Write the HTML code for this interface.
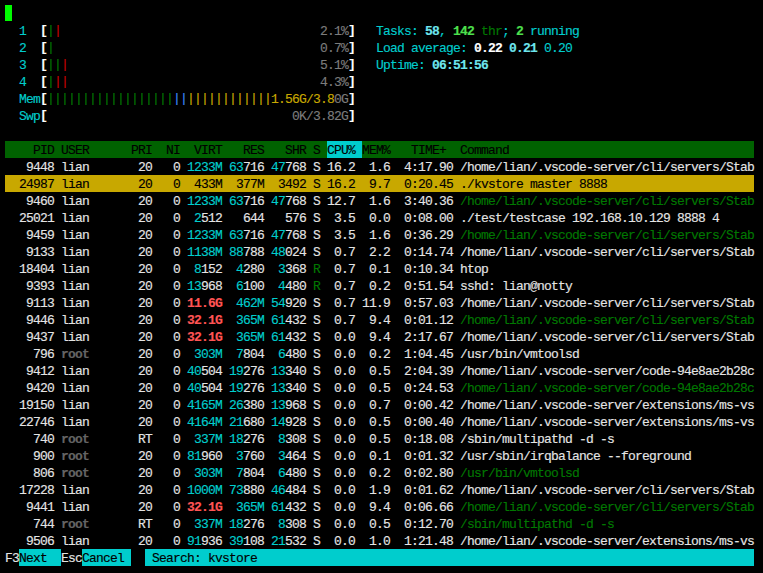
<!DOCTYPE html><html><head><meta charset="utf-8"><style>
html,body{margin:0;padding:0;background:#000;width:763px;height:573px;overflow:hidden;position:relative}
.q{position:absolute}
.r{position:absolute;left:5px;height:17px;line-height:17px;white-space:pre;font-family:"Liberation Mono",monospace;font-size:13px;letter-spacing:-0.8013px;transform-origin:0 0;transform:scaleX(1.00000);-webkit-text-stroke:0.15px currentColor}
.sw{color:#e4e4e4}
.bw{color:#ffffff;font-weight:bold}
.sc{color:#00cdcd}
.bc{color:#6ee6ee;font-weight:bold}
.sg{color:#007800}
.bg{color:#4ee04e;font-weight:bold}
.sd{color:#7c7c7c}
.sr{color:#c80000}
.br{color:#ff5454;font-weight:bold}
.sb{color:#3c8cff}
.sy{color:#c8a800}
.sk{color:#000000}
.sx{color:#646464;font-weight:bold}
.zgb{color:#007800;position:relative;top:-1px}
.zwb{color:#ffffff;font-weight:bold;position:relative;top:-1px}
.zrb{color:#c80000;position:relative;top:-1px}
.zbb{color:#3c8cff;position:relative;top:-1px}
.zyb{color:#c8a800;position:relative;top:-1px}
</style></head><body>
<div class="q" style="left:5px;top:5px;width:7px;height:16px;background:#00fa00"></div>
<div class="q" style="left:5px;top:141px;width:749px;height:17px;background:#006200"></div>
<div class="q" style="left:327px;top:141px;width:35px;height:17px;background:#00cdcd"></div>
<div class="q" style="left:5px;top:175px;width:749px;height:17px;background:#c8a800"></div>
<div class="q" style="left:19px;top:549px;width:42px;height:17px;background:#00cdcd"></div>
<div class="q" style="left:82px;top:549px;width:49px;height:17px;background:#00cdcd"></div>
<div class="q" style="left:145px;top:549px;width:609px;height:17px;background:#00cdcd"></div>
<div class="r" style="top:23px"><span class="sw">  </span><span class="sc">1  </span><span class="zwb">[</span><span class="zgb">|</span><span class="zrb">|                                     </span><span class="sd">2.1%</span><span class="zwb">]   </span><span class="sc">Tasks: </span><span class="bc">58</span><span class="sc">, </span><span class="bg">142 </span><span class="sg">thr</span><span class="sc">; </span><span class="bg">2 </span><span class="sc">running</span></div>
<div class="r" style="top:40px"><span class="sw">  </span><span class="sc">2  </span><span class="zwb">[</span><span class="zgb">|                                      </span><span class="sd">0.7%</span><span class="zwb">]   </span><span class="sc">Load average: </span><span class="bw">0.22 </span><span class="bc">0.21 </span><span class="sc">0.20</span></div>
<div class="r" style="top:57px"><span class="sw">  </span><span class="sc">3  </span><span class="zwb">[</span><span class="zgb">||</span><span class="zrb">|                                    </span><span class="sd">5.1%</span><span class="zwb">]   </span><span class="sc">Uptime: </span><span class="bc">06:51:56</span></div>
<div class="r" style="top:74px"><span class="sw">  </span><span class="sc">4  </span><span class="zwb">[</span><span class="zgb">|</span><span class="zrb">||                                    </span><span class="sd">4.3%</span><span class="zwb">]</span></div>
<div class="r" style="top:91px"><span class="sw">  </span><span class="sc">Mem</span><span class="zwb">[</span><span class="zgb">||||||||||||||||||</span><span class="zbb">||</span><span class="zyb">||||||||||||</span><span class="sy">1.56G/3.8</span><span class="sd">0G</span><span class="zwb">]</span></div>
<div class="r" style="top:108px"><span class="sw">  </span><span class="sc">Swp</span><span class="zwb">[                                   </span><span class="sd">0K/3.82G</span><span class="zwb">]</span></div>
<div class="r" style="top:142px"><span class="sw">    </span><span class="sk">PID USER      PRI  NI  VIRT   RES   SHR S CPU% MEM%   TIME+  Command</span></div>
<div class="r" style="top:159px"><span class="sw">   9448 lian       20   0 </span><span class="sc">1233M 63</span><span class="sw">716 </span><span class="sc">47</span><span class="sw">768 S 16.2  1.6  4:17.90 /home/lian/.vscode-server/cli/servers/Stab</span></div>
<div class="r" style="top:176px"><span class="sw">  </span><span class="sk">24987 lian       20   0  433M  377M  3492 S 16.2  9.7  0:20.45 ./kvstore master 8888</span></div>
<div class="r" style="top:193px"><span class="sw">   9460 lian       20   0 </span><span class="sc">1233M 63</span><span class="sw">716 </span><span class="sc">47</span><span class="sw">768 S 12.7  1.6  3:40.36 </span><span class="sg">/home/lian/.vscode-server/cli/servers/Stab</span></div>
<div class="r" style="top:210px"><span class="sw">  25021 lian       20   0  </span><span class="sc">2</span><span class="sw">512   644   576 S  3.5  0.0  0:08.00 ./test/testcase 192.168.10.129 8888 4</span></div>
<div class="r" style="top:227px"><span class="sw">   9459 lian       20   0 </span><span class="sc">1233M 63</span><span class="sw">716 </span><span class="sc">47</span><span class="sw">768 S  3.5  1.6  0:36.29 </span><span class="sg">/home/lian/.vscode-server/cli/servers/Stab</span></div>
<div class="r" style="top:244px"><span class="sw">   9133 lian       20   0 </span><span class="sc">1138M 88</span><span class="sw">788 </span><span class="sc">48</span><span class="sw">024 S  0.7  2.2  0:14.74 /home/lian/.vscode-server/cli/servers/Stab</span></div>
<div class="r" style="top:261px"><span class="sw">  18404 lian       20   0  </span><span class="sc">8</span><span class="sw">152  </span><span class="sc">4</span><span class="sw">280  </span><span class="sc">3</span><span class="sw">368 </span><span class="sg">R  </span><span class="sw">0.7  0.1  0:10.34 htop</span></div>
<div class="r" style="top:278px"><span class="sw">   9393 lian       20   0 </span><span class="sc">13</span><span class="sw">968  </span><span class="sc">6</span><span class="sw">100  </span><span class="sc">4</span><span class="sw">480 </span><span class="sg">R  </span><span class="sw">0.7  0.2  0:51.54 sshd: lian@notty</span></div>
<div class="r" style="top:295px"><span class="sw">   9113 lian       20   0 </span><span class="br">11.6G  </span><span class="sc">462M 54</span><span class="sw">920 S  0.7 11.9  0:57.03 /home/lian/.vscode-server/cli/servers/Stab</span></div>
<div class="r" style="top:312px"><span class="sw">   9446 lian       20   0 </span><span class="br">32.1G  </span><span class="sc">365M 61</span><span class="sw">432 S  0.7  9.4  0:01.12 </span><span class="sg">/home/lian/.vscode-server/cli/servers/Stab</span></div>
<div class="r" style="top:329px"><span class="sw">   9437 lian       20   0 </span><span class="br">32.1G  </span><span class="sc">365M 61</span><span class="sw">432 S  0.0  9.4  2:17.67 /home/lian/.vscode-server/cli/servers/Stab</span></div>
<div class="r" style="top:346px"><span class="sw">    796 </span><span class="sx">root       </span><span class="sw">20   0  </span><span class="sc">303M  7</span><span class="sw">804  </span><span class="sc">6</span><span class="sw">480 S  0.0  0.2  1:04.45 /usr/bin/vmtoolsd</span></div>
<div class="r" style="top:363px"><span class="sw">   9412 lian       20   0 </span><span class="sc">40</span><span class="sw">504 </span><span class="sc">19</span><span class="sw">276 </span><span class="sc">13</span><span class="sw">340 S  0.0  0.5  2:04.39 /home/lian/.vscode-server/code-94e8ae2b28c</span></div>
<div class="r" style="top:380px"><span class="sw">   9420 lian       20   0 </span><span class="sc">40</span><span class="sw">504 </span><span class="sc">19</span><span class="sw">276 </span><span class="sc">13</span><span class="sw">340 S  0.0  0.5  0:24.53 </span><span class="sg">/home/lian/.vscode-server/code-94e8ae2b28c</span></div>
<div class="r" style="top:397px"><span class="sw">  19150 lian       20   0 </span><span class="sc">4165M 26</span><span class="sw">380 </span><span class="sc">13</span><span class="sw">968 S  0.0  0.7  0:00.42 /home/lian/.vscode-server/extensions/ms-vs</span></div>
<div class="r" style="top:414px"><span class="sw">  22746 lian       20   0 </span><span class="sc">4164M 21</span><span class="sw">680 </span><span class="sc">14</span><span class="sw">928 S  0.0  0.5  0:00.40 /home/lian/.vscode-server/extensions/ms-vs</span></div>
<div class="r" style="top:431px"><span class="sw">    740 </span><span class="sx">root       </span><span class="sw">RT   0  </span><span class="sc">337M 18</span><span class="sw">276  </span><span class="sc">8</span><span class="sw">308 S  0.0  0.5  0:18.08 /sbin/multipathd -d -s</span></div>
<div class="r" style="top:448px"><span class="sw">    900 </span><span class="sx">root       </span><span class="sw">20   0 </span><span class="sc">81</span><span class="sw">960  </span><span class="sc">3</span><span class="sw">760  </span><span class="sc">3</span><span class="sw">464 S  0.0  0.1  0:01.32 /usr/sbin/irqbalance --foreground</span></div>
<div class="r" style="top:465px"><span class="sw">    806 </span><span class="sx">root       </span><span class="sw">20   0  </span><span class="sc">303M  7</span><span class="sw">804  </span><span class="sc">6</span><span class="sw">480 S  0.0  0.2  0:02.80 </span><span class="sg">/usr/bin/vmtoolsd</span></div>
<div class="r" style="top:482px"><span class="sw">  17228 lian       20   0 </span><span class="sc">1000M 73</span><span class="sw">880 </span><span class="sc">46</span><span class="sw">484 S  0.0  1.9  0:01.62 /home/lian/.vscode-server/cli/servers/Stab</span></div>
<div class="r" style="top:499px"><span class="sw">   9441 lian       20   0 </span><span class="br">32.1G  </span><span class="sc">365M 61</span><span class="sw">432 S  0.0  9.4  0:06.66 </span><span class="sg">/home/lian/.vscode-server/cli/servers/Stab</span></div>
<div class="r" style="top:516px"><span class="sw">    744 </span><span class="sx">root       </span><span class="sw">RT   0  </span><span class="sc">337M 18</span><span class="sw">276  </span><span class="sc">8</span><span class="sw">308 S  0.0  0.5  0:12.70 </span><span class="sg">/sbin/multipathd -d -s</span></div>
<div class="r" style="top:533px"><span class="sw">   9506 lian       20   0 </span><span class="sc">91</span><span class="sw">936 </span><span class="sc">39</span><span class="sw">108 </span><span class="sc">21</span><span class="sw">532 S  0.0  1.0  1:21.48 /home/lian/.vscode-server/extensions/ms-vs</span></div>
<div class="r" style="top:550px"><span class="sw">F3</span><span class="sk">Next  </span><span class="sw">Esc</span><span class="sk">Cancel    Search: kvstore</span></div>
</body></html>
